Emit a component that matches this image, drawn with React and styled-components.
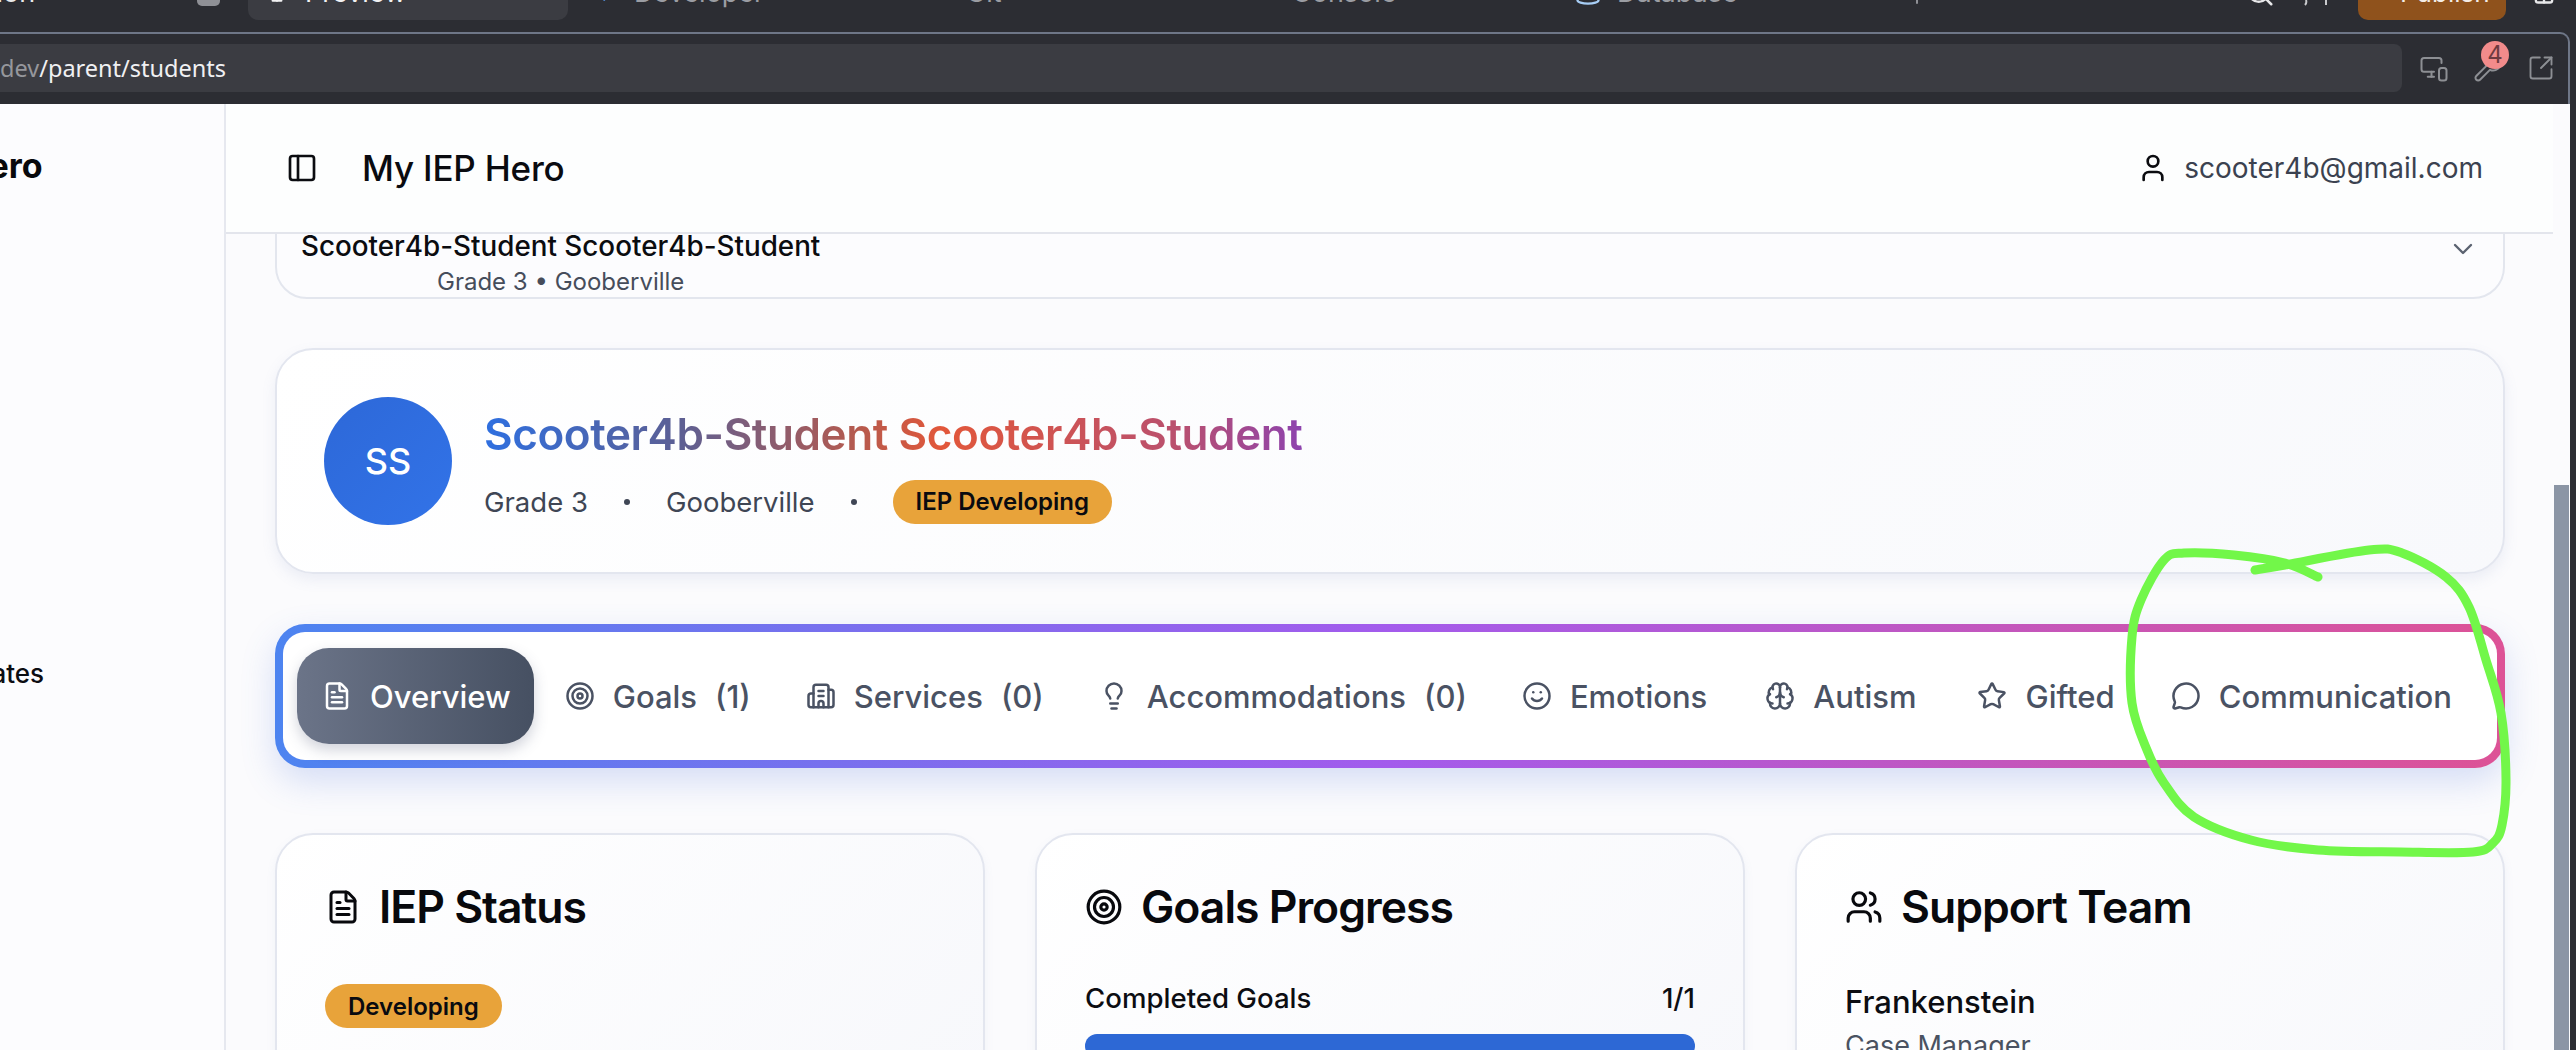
import React from "react";
import styled, { createGlobalStyle } from "styled-components";
import {
  FileText, Target, Building2, Lightbulb, Smile, Brain, Star, MessageCircle, Users, User,
  PanelLeft, ChevronDown, MonitorSmartphone, Wrench, SquareArrowOutUpRight, Search, Database, GitBranch, Terminal, Code2, Gift, Monitor,
} from "lucide-react";

const Global = createGlobalStyle`
  html, body { margin: 0; padding: 0; background: #2c2d33; }
  * { box-sizing: border-box; }
  body { font-family: Inter, "Liberation Sans", sans-serif; }
`;

const Page = styled.div`
  position: relative;
  width: 2576px;
  height: 1050px;
  overflow: hidden;
  display: flex;
  flex-direction: column;
  background: #2c2d33;
`;

/* ---------- IDE chrome ---------- */
const Chrome = styled.div`
  height: 104px;
  flex: none;
  display: flex;
  flex-direction: column;
`;
const TabStrip = styled.div`
  height: 32px;
  flex: none;
  display: flex;
  align-items: flex-start;
`;
const ChromeTab = styled.div`
  width: ${(p) => p.$w}px;
  height: 20px;
  flex: none;
  overflow: hidden;
  display: flex;
  align-items: flex-start;
  gap: ${(p) => p.$gap ?? 14}px;
  padding-left: ${(p) => p.$pad ?? 0}px;
  color: ${(p) => (p.$on ? "#f2f2f3" : p.$light ? "#e8e8ea" : "#9b9da3")};
  background: ${(p) => (p.$on ? "#3b3c42" : "transparent")};
  border-radius: ${(p) => (p.$on ? "0 0 10px 10px" : "0")};
  font-size: 27px;
  line-height: 30px;
  svg { flex: none; margin-top: -22px; }
`;
const ChromeLabel = styled.span`
  margin-top: -22px;
  white-space: nowrap;
  margin-left: ${(p) => p.$shift ?? 0}px;
`;
const Pill = styled.span`
  width: ${(p) => p.$w ?? 23}px;
  height: ${(p) => p.$h ?? 6}px;
  background: #8f9096;
  border-radius: 0 0 5px 5px;
  flex: none;
`;
const PublishBtn = styled.div`
  width: 148px;
  height: 20px;
  flex: none;
  overflow: hidden;
  background: #8f521c;
  border-radius: 0 0 10px 10px;
  color: #f4ede6;
  font-size: 26px;
  line-height: 30px;
  padding-left: 42px;
  margin-right: 24px;
`;
const PublishLabel = styled.span`
  display: block;
  margin-top: -22px;
`;
const UrlRow = styled.div`
  flex: 1;
  border-top: 2px solid #6e7687;
  border-right: 2px solid #6e7687;
  border-top-right-radius: 10px;
  margin-right: 6px;
  display: flex;
  align-items: flex-start;
  padding-top: 10px;
`;
const UrlBar = styled.div`
  width: 2402px;
  height: 48px;
  flex: none;
  background: #3b3c42;
  border-radius: 0 8px 8px 0;
  display: flex;
  align-items: center;
  font-family: "Noto Sans", "Liberation Sans", sans-serif;
  font-size: 23.5px;
  color: #f0f0f2;
  overflow: hidden;
`;
const UrlFaint = styled.span`
  color: #96979c;
`;
const UrlTools = styled.div`
  display: flex;
  align-items: center;
  gap: 24px;
  margin-left: 17px;
  color: #8d8f94;
  height: 48px;
  position: relative;
`;
const CountBadge = styled.span`
  position: absolute;
  left: 62px;
  top: -3px;
  width: 28px;
  height: 28px;
  border-radius: 50%;
  background: #f28b8b;
  color: #6e3b40;
  font-size: 24px;
  line-height: 28px;
  text-align: center;
`;

/* ---------- App body ---------- */
const Body = styled.div`
  flex: 1;
  min-height: 0;
  display: flex;
`;
const Sidebar = styled.aside`
  width: 226px;
  flex: none;
  background: #fcfcfe;
  border-right: 2px solid #e6e8ef;
  overflow: hidden;
  display: flex;
  flex-direction: column;
`;
const SideBrand = styled.div`
  margin-top: 44px;
  margin-left: -${(p) => p.$shift}px;
  font-size: 34px;
  line-height: 36px;
  font-weight: 700;
  color: #08090c;
  white-space: nowrap;
`;
const SideItem = styled.div`
  margin-top: 472px;
  margin-left: -${(p) => p.$shift}px;
  font-size: 26px;
  line-height: 36px;
  font-weight: 500;
  color: #0c0d12;
  white-space: nowrap;
`;
const Main = styled.main`
  flex: 1;
  min-width: 0;
  display: flex;
  flex-direction: column;
  background: #fbfbfd;
`;
const Header = styled.header`
  height: 130px;
  flex: none;
  display: flex;
  align-items: center;
  justify-content: space-between;
  padding: 0 70px 0 60px;
  background: #fdfefe;
  border-bottom: 2px solid #e3e5ec;
  position: relative;
  z-index: 1;
`;
const HeaderLeft = styled.div`
  display: flex;
  align-items: center;
  gap: 44px;
`;
const HeaderTitle = styled.h1`
  margin: 0;
  font-size: 35px;
  font-weight: 500;
  letter-spacing: -0.2px;
  color: #0a0b10;
`;
const HeaderUser = styled.div`
  display: flex;
  align-items: center;
  gap: 15px;
  font-size: 28px;
  color: #3b4250;
  svg { color: #0b0c10; }
`;
const Content = styled.div`
  flex: 1;
  min-height: 0;
  overflow: hidden;
  padding: 0 48px 0 49px;
  display: flex;
  flex-direction: column;
`;
const Selector = styled.div`
  flex: none;
  height: 100px;
  margin-top: -35px;
  padding: 0 24px 0 24px;
  border: 2px solid #e3e6ee;
  border-radius: 32px;
  background: #fcfcfe;
  display: flex;
  align-items: center;
  justify-content: space-between;
  color: #5b6270;
`;
const SelectorText = styled.div`
  display: flex;
  flex-direction: column;
  align-items: center;
  padding-top: 28px;
`;
const SelectorName = styled.div`
  font-size: 27.8px;
  line-height: 38px;
  font-weight: 500;
  color: #0b0c10;
`;
const SelectorMeta = styled.div`
  font-size: 24px;
  line-height: 34px;
  color: #464d5b;
`;
const ProfileCard = styled.section`
  flex: none;
  height: 226px;
  margin-top: 49px;
  padding: 0 47px;
  display: flex;
  align-items: center;
  gap: 32px;
  background: linear-gradient(135deg, #ffffff, #f8f9fc);
  border: 2px solid #e3e6ef;
  border-radius: 38px;
  box-shadow: 0 6px 14px rgba(120, 140, 190, 0.12);
`;
const Avatar = styled.div`
  width: 128px;
  height: 128px;
  flex: none;
  border-radius: 50%;
  background: linear-gradient(135deg, #2d68d8, #3273e8);
  color: #fff;
  font-size: 36px;
  font-weight: 500;
  display: flex;
  align-items: center;
  justify-content: center;
`;
const ProfileInfo = styled.div`
  display: flex;
  flex-direction: column;
  gap: 19px;
  padding-top: 8px;
`;
const ProfileName = styled.h2`
  margin: 0;
  font-size: 44px;
  line-height: 54px;
  font-weight: 600;
  letter-spacing: -0.4px;
  width: fit-content;
  background: linear-gradient(90deg, #2e6fe0 0%, #5d5f93 24%, #b75a4d 46%, #e2573a 56%, #b9506f 85%, #8d43ae 100%);
  -webkit-background-clip: text;
  background-clip: text;
  color: transparent;
`;
const ProfileMeta = styled.div`
  display: flex;
  align-items: center;
  gap: 36px;
  font-size: 27.5px;
  color: #3f4655;
`;
const Dot = styled.span`
  width: 6px;
  height: 6px;
  border-radius: 50%;
  background: #3f4655;
  flex: none;
`;
const StatusBadge = styled.span`
  display: inline-flex;
  align-items: center;
  height: 44px;
  padding: 0 23px;
  border-radius: 22px;
  background: #e8a33a;
  color: #0a0b10;
  font-size: 24px;
  font-weight: 600;
  width: fit-content;
`;
const TabBar = styled.nav`
  flex: none;
  height: 144px;
  margin-top: 50px;
  padding: 8px;
  border-radius: 30px;
  background: linear-gradient(90deg, #4d84f0 0%, #a35bec 50%, #dd5296 100%);
  box-shadow: 0 14px 34px rgba(80, 120, 220, 0.22);
`;
const TabInner = styled.div`
  height: 100%;
  background: #fff;
  border-radius: 22px;
  display: flex;
  align-items: center;
  gap: 7px;
  padding: 0 21px 0 14px;
`;
const Tab = styled.div`
  height: 96px;
  display: flex;
  align-items: center;
  gap: 18px;
  padding: 0 ${(p) => (p.$active ? "23px 0 25px" : "24px")};
  margin-left: ${(p) => p.$lead ?? 0}px;
  border-radius: 32px;
  font-size: 31px;
  font-weight: 500;
  color: ${(p) => (p.$active ? "#fff" : "#4a5263")};
  background: ${(p) => (p.$active ? "linear-gradient(90deg, #6b7488, #465062)" : "transparent")};
  box-shadow: ${(p) => (p.$active ? "0 6px 14px rgba(70, 80, 110, 0.25)" : "none")};
  white-space: nowrap;
  &:last-child { margin-left: auto; }
`;
const CardRow = styled.div`
  flex: none;
  margin-top: 65px;
  display: grid;
  grid-template-columns: repeat(3, 710px);
  justify-content: space-between;
`;
const Card = styled.section`
  height: 400px;
  padding: 46px 48px;
  background: linear-gradient(135deg, #ffffff, #f6f7fb);
  border: 2px solid #e3e6ef;
  border-radius: 38px;
  box-shadow: 0 4px 10px rgba(120, 140, 190, 0.08);
`;
const CardTitle = styled.h3`
  margin: 0 0 ${(p) => p.$gap}px;
  height: 52px;
  display: flex;
  align-items: center;
  gap: 18px;
  font-size: 44.5px;
  font-weight: 600;
  letter-spacing: -1px;
  color: #08090d;
`;
const ProgressHead = styled.div`
  display: flex;
  justify-content: space-between;
  font-size: 27.6px;
  line-height: 36px;
  font-weight: 500;
  color: #0c0d12;
`;
const ProgressBar = styled.div`
  height: 24px;
  margin-top: 18px;
  border-radius: 12px;
  background: #2d68d5;
`;
const PersonName = styled.div`
  font-size: 31px;
  line-height: 40px;
  font-weight: 500;
  color: #0c0d12;
`;
const PersonRole = styled.div`
  font-size: 27px;
  line-height: 40px;
  color: #4a5261;
  margin-top: 4px;
`;
const ScrollTrack = styled.div`
  width: 17px;
  flex: none;
  background: #fbfbfd;
  padding: 381px 1px 0 1px;
`;
const ScrollThumb = styled.div`
  height: 100%;
  background: #8b95a5;
`;
const RightEdge = styled.div`
  width: 6px;
  flex: none;
  background: #2c2d33;
`;
const Annotation = styled.svg`
  position: absolute;
  inset: 0;
  pointer-events: none;
`;

const strokePoints = [[2255,570],[2285,565],[2369,550],[2402,553],[2446,577],[2469,607],[2486,660],[2501,713],[2506,780],[2502,825],[2493,843],[2473,852],[2400,852],[2318,850],[2251,840],[2194,817],[2164,783],[2147,750],[2132,703],[2132,637],[2141,600],[2164,560],[2184,553],[2234,555],[2285,563],[2318,577]];

function smooth(pts) {
  let d = `M${pts[0][0]} ${pts[0][1]}`;
  for (let i = 0; i < pts.length - 1; i++) {
    const p0 = pts[i - 1] || pts[i];
    const p1 = pts[i];
    const p2 = pts[i + 1];
    const p3 = pts[i + 2] || p2;
    const c1x = p1[0] + (p2[0] - p0[0]) / 6;
    const c1y = p1[1] + (p2[1] - p0[1]) / 6;
    const c2x = p2[0] - (p3[0] - p1[0]) / 6;
    const c2y = p2[1] - (p3[1] - p1[1]) / 6;
    d += ` C${c1x} ${c1y} ${c2x} ${c2y} ${p2[0]} ${p2[1]}`;
  }
  return d;
}

const tabs = [
  { icon: FileText, label: "Overview", active: true },
  { icon: Target, label: "Goals", count: "(1)" },
  { icon: Building2, label: "Services", count: "(0)" },
  { icon: Lightbulb, label: "Accommodations", count: "(0)" },
  { icon: Smile, label: "Emotions" },
  { icon: Brain, label: "Autism", lead: 3 },
  { icon: Star, label: "Gifted", lead: 6 },
  { icon: MessageCircle, label: "Communication" },
];

export default function App() {
  return (
    <Page>
      <Global />
      <Chrome>
        <TabStrip>
          <ChromeTab $w={197} $light>
            <ChromeLabel $shift={-190}>Agent companion</ChromeLabel>
          </ChromeTab>
          <ChromeTab $w={51}><Pill /></ChromeTab>
          <ChromeTab $w={320} $on $pad={16} $gap={15}>
            <Monitor size={26} />
            <ChromeLabel>Preview</ChromeLabel>
          </ChromeTab>
          <ChromeTab $w={332} $pad={26}>
            <Code2 size={26} color="#5da4ff" />
            <ChromeLabel>Developer</ChromeLabel>
          </ChromeTab>
          <ChromeTab $w={330} $pad={28}>
            <GitBranch size={24} color="#7ddc7a" />
            <ChromeLabel>Git</ChromeLabel>
          </ChromeTab>
          <ChromeTab $w={318} $pad={24}>
            <Terminal size={24} color="#f1d771" />
            <ChromeLabel>Console</ChromeLabel>
          </ChromeTab>
          <ChromeTab $w={368} $pad={26} $gap={15}>
            <Database size={28} color="#a7cdf5" />
            <ChromeLabel>Database</ChromeLabel>
          </ChromeTab>
          <ChromeTab $w={329}><Pill $w={2} $h={4} /></ChromeTab>
          <ChromeTab $w={57} $light><Search size={30} /></ChromeTab>
          <ChromeTab $w={56} $light>
            <svg width="30" height="30" viewBox="0 0 30 30" style={{ marginTop: 0 }}>
              <path d="M4 0 Q5 3 3 5 M24 0 V5" fill="none" stroke="#c9cacd" strokeWidth="2" />
            </svg>
          </ChromeTab>
          <PublishBtn><PublishLabel>Publish</PublishLabel></PublishBtn>
          <ChromeTab $w={30} $light><Gift size={28} /></ChromeTab>
        </TabStrip>
        <UrlRow>
          <UrlBar>
            <UrlFaint>dev</UrlFaint>/parent/students
          </UrlBar>
          <UrlTools>
            <MonitorSmartphone size={30} strokeWidth={1.6} />
            <Wrench size={30} strokeWidth={1.6} />
            <CountBadge>4</CountBadge>
            <SquareArrowOutUpRight size={28} strokeWidth={1.6} />
          </UrlTools>
        </UrlRow>
      </Chrome>

      <Body>
        <Sidebar>
          <SideBrand $shift={37}>Hero</SideBrand>
          <SideItem $shift={60}>Updates</SideItem>
        </Sidebar>
        <Main>
          <Header>
            <HeaderLeft>
              <PanelLeft size={32} color="#0b0c10" strokeWidth={2} />
              <HeaderTitle>My IEP Hero</HeaderTitle>
            </HeaderLeft>
            <HeaderUser>
              <User size={32} strokeWidth={2} />
              scooter4b@gmail.com
            </HeaderUser>
          </Header>
          <Content>
            <Selector>
              <SelectorText>
                <SelectorName>Scooter4b-Student Scooter4b-Student</SelectorName>
                <SelectorMeta>Grade 3 • Gooberville</SelectorMeta>
              </SelectorText>
              <ChevronDown size={32} strokeWidth={1.8} />
            </Selector>
            <ProfileCard>
              <Avatar>SS</Avatar>
              <ProfileInfo>
                <ProfileName>Scooter4b-Student Scooter4b-Student</ProfileName>
                <ProfileMeta>
                  <span>Grade 3</span>
                  <Dot />
                  <span>Gooberville</span>
                  <Dot />
                  <StatusBadge>IEP Developing</StatusBadge>
                </ProfileMeta>
              </ProfileInfo>
            </ProfileCard>
            <TabBar>
              <TabInner>
                {tabs.map(({ icon: Icon, label, count, active, lead }) => (
                  <Tab key={label} $active={active} $lead={lead}>
                    <Icon size={30} strokeWidth={2} />
                    <span>{label}</span>
                    {count && <span>{count}</span>}
                  </Tab>
                ))}
              </TabInner>
            </TabBar>
            <CardRow>
              <Card>
                <CardTitle $gap={51}>
                  <FileText size={36} strokeWidth={2} />
                  IEP Status
                </CardTitle>
                <StatusBadge>Developing</StatusBadge>
              </Card>
              <Card>
                <CardTitle $gap={47}>
                  <Target size={38} strokeWidth={2} />
                  Goals Progress
                </CardTitle>
                <ProgressHead>
                  <span>Completed Goals</span>
                  <span>1/1</span>
                </ProgressHead>
                <ProgressBar />
              </Card>
              <Card>
                <CardTitle $gap={49}>
                  <Users size={38} strokeWidth={2} />
                  Support Team
                </CardTitle>
                <PersonName>Frankenstein</PersonName>
                <PersonRole>Case Manager</PersonRole>
              </Card>
            </CardRow>
          </Content>
        </Main>
        <ScrollTrack><ScrollThumb /></ScrollTrack>
        <RightEdge />
      </Body>

      <Annotation width="2576" height="1050" viewBox="0 0 2576 1050">
        <path d={smooth(strokePoints)} fill="none" stroke="#72f749" strokeWidth="9" strokeLinecap="round" strokeLinejoin="round" />
      </Annotation>
    </Page>
  );
}
